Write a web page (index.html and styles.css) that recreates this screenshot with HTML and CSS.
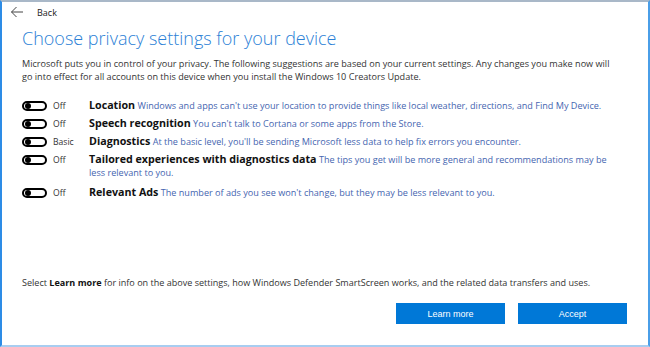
FILE: index.html
```html
<!DOCTYPE html>
<html lang="en">
<head>
    <meta charset="UTF-8">
    <title>Choose privacy settings</title>
    <link rel="stylesheet" href="styles.css">
</head>
<body>
    <div class="window">
        <div class="topbar">
            <svg class="back-arrow" width="14" height="12" viewBox="0 0 14 12">
                <path d="M13 6H1.5M6.5 1L1.5 6l5 5" fill="none" stroke="#444" stroke-width="1"/>
            </svg>
            <span class="back-label">Back</span>
        </div>

        <div class="content">
            <h1>Choose privacy settings for your device</h1>
            <p class="intro">Microsoft puts you in control of your privacy. The following suggestions are based on your current settings. Any changes you make now will go into effect for all accounts on this device when you install the Windows 10 Creators Update.</p>

            <div class="settings">
                <div class="setting">
                    <div class="switch-col"><span class="switch"></span><span class="state">Off</span></div>
                    <div class="text"><b>Location</b> Windows and apps can't use your location to provide things like local weather, directions, and Find My Device.</div>
                </div>
                <div class="setting">
                    <div class="switch-col"><span class="switch"></span><span class="state">Off</span></div>
                    <div class="text"><b>Speech recognition</b> You can't talk to Cortana or some apps from the Store.</div>
                </div>
                <div class="setting">
                    <div class="switch-col"><span class="switch"></span><span class="state">Basic</span></div>
                    <div class="text"><b>Diagnostics</b> At the basic level, you'll be sending Microsoft less data to help fix errors you encounter.</div>
                </div>
                <div class="setting">
                    <div class="switch-col"><span class="switch"></span><span class="state">Off</span></div>
                    <div class="text"><b>Tailored experiences with diagnostics data</b> The tips you get will be more general and recommendations may be less relevant to you.</div>
                </div>
                <div class="setting spaced">
                    <div class="switch-col"><span class="switch"></span><span class="state">Off</span></div>
                    <div class="text"><b>Relevant Ads</b> The number of ads you see won't change, but they may be less relevant to you.</div>
                </div>
            </div>

            <p class="footnote">Select <b>Learn more</b> for info on the above settings, how Windows Defender SmartScreen works, and the related data transfers and uses.</p>

            <div class="actions">
                <button>Learn more</button>
                <button>Accept</button>
            </div>
        </div>
    </div>
</body>
</html>
```

FILE: styles.css
```css
html, body {
    margin: 0;
    padding: 0;
}
body {
    font-family: "Open Sans", "Noto Sans", sans-serif;
    color: #333;
    background: #fff;
}
.window {
    width: 650px;
    height: 347px;
    box-sizing: border-box;
    border-top: 2px solid #a9b8c8;
    border-left: 2px solid #2d8ce6;
    border-right: 2px solid #4a9ee8;
    border-bottom: 2px solid #a8cdf0;
    display: flex;
    flex-direction: column;
}
.topbar {
    display: flex;
    align-items: center;
    height: 20px;
    padding-left: 8px;
}
.back-arrow {
    display: block;
}
.back-label {
    font-size: 9px;
    margin-left: 13px;
    color: #222;
}
.content {
    padding: 0 20px;
    display: flex;
    flex-direction: column;
    flex: 1;
}
h1 {
    margin: 3px 0 0;
    font-size: 18px;
    font-weight: 300;
    color: #2b7fd6;
    line-height: 26px;
}
.intro {
    margin: 6px 0 0;
    font-size: 9.1px;
    line-height: 13px;
    color: #333;
    width: 598px;
}
.settings {
    margin-top: 16px;
    display: flex;
    flex-direction: column;
    gap: 5px;
}
.setting {
    display: flex;
    align-items: flex-start;
}
.setting.spaced {
    margin-top: 2px;
}
.switch-col {
    width: 67px;
    flex-shrink: 0;
    display: flex;
    align-items: center;
    height: 13px;
}
.switch {
    position: relative;
    width: 21px;
    height: 6px;
    border: 2px solid #000;
    border-radius: 6px;
}
.switch::after {
    content: "";
    position: absolute;
    left: 1px;
    top: 0;
    width: 6px;
    height: 6px;
    border-radius: 50%;
    background: #000;
}
.state {
    font-size: 8.6px;
    margin-left: 6px;
    color: #333;
}
.text {
    font-size: 9.1px;
    line-height: 13px;
    color: #4565b0;
    width: 522px;
}
.text b {
    font-size: 10.7px;
    line-height: 1;
    color: #111;
    font-weight: 700;
}
.footnote {
    margin: auto 0 0;
    font-size: 9.05px;
    line-height: 13px;
    color: #333;
}
.footnote b {
    color: #111;
}
.actions {
    display: flex;
    justify-content: flex-end;
    gap: 13px;
    margin: 14px 1px 21px 0;
}
button {
    width: 109px;
    height: 21px;
    background: #0078d7;
    color: #fff;
    border: none;
    font-family: "Liberation Sans", Arial, sans-serif;
    font-size: 9px;
    padding: 0;
}
```
